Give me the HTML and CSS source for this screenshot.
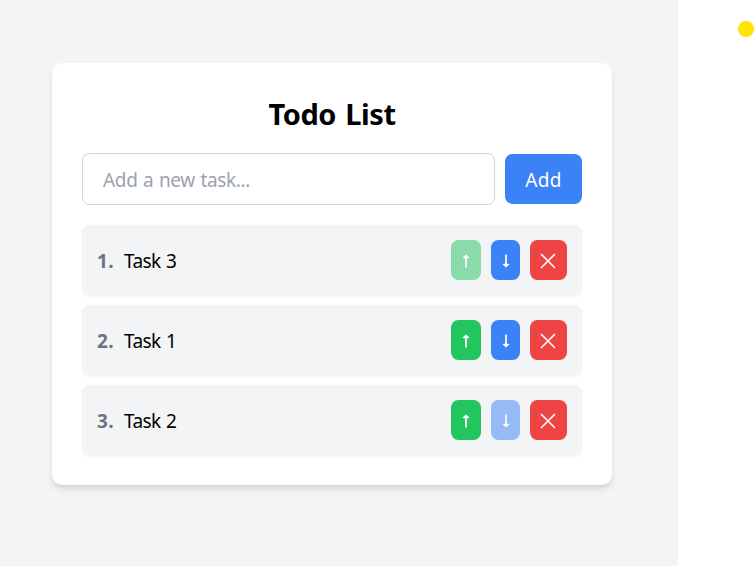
FILE: index.html
```
<!DOCTYPE html>
<html lang="en">
<head>
<meta charset="utf-8">
<title>Todo List</title>
<link rel="stylesheet" href="styles.css">
</head>
<body>
<svg class="symbols" aria-hidden="true">
  <symbol id="up" viewBox="0 0 10 14"><path class="shaft" d="M5 13.5V2"/><path class="head" d="M5 .4 8.5 3.8 7.8 4.3H2.2L1.5 3.8Z"/></symbol>
  <symbol id="down" viewBox="0 0 10 14"><path class="shaft" d="M5 .5V12"/><path class="head" d="M5 13.6 1.5 10.2 2.2 9.7H7.8L8.5 10.2Z"/></symbol>
  <symbol id="cross" viewBox="0 0 16 16"><path d="M1 1l14 14M15 1 1 15"/></symbol>
</svg>
<main class="page">
  <section class="card">
    <h1 class="title">Todo List</h1>
    <form class="form">
      <input class="input" type="text" placeholder="Add a new task...">
      <button class="add" type="button">Add</button>
    </form>
    <ul class="list">
      <li class="item">
        <span class="num">1.</span><span class="name">Task 3</span>
        <button class="btn up disabled" type="button"><svg class="arrow"><use href="#up"/></svg></button>
        <button class="btn down" type="button"><svg class="arrow"><use href="#down"/></svg></button>
        <button class="btn remove" type="button"><svg class="cross"><use href="#cross"/></svg></button>
      </li>
      <li class="item">
        <span class="num">2.</span><span class="name">Task 1</span>
        <button class="btn up" type="button"><svg class="arrow"><use href="#up"/></svg></button>
        <button class="btn down" type="button"><svg class="arrow"><use href="#down"/></svg></button>
        <button class="btn remove" type="button"><svg class="cross"><use href="#cross"/></svg></button>
      </li>
      <li class="item">
        <span class="num">3.</span><span class="name">Task 2</span>
        <button class="btn up" type="button"><svg class="arrow"><use href="#up"/></svg></button>
        <button class="btn down disabled" type="button"><svg class="arrow"><use href="#down"/></svg></button>
        <button class="btn remove" type="button"><svg class="cross"><use href="#cross"/></svg></button>
      </li>
    </ul>
  </section>
</main>
<div class="dot"></div>
</body>
</html>
```
FILE: styles.css
```
* { box-sizing: border-box; margin: 0; padding: 0; }
body {
  height: 566px;
  overflow: hidden;
  background: #fff;
  color: #000;
  font: 19px/30px "Noto Sans", "Open Sans", sans-serif;
}
button, input { font: inherit; border: 0; }
.symbols { position: absolute; width: 0; height: 0; }
.page { width: 678px; height: 566px; padding: 63px 0 0 52px; background: #f3f4f6; }
.card {
  width: 560px;
  height: 422px;
  padding: 30px;
  border-radius: 10px;
  background: #fff;
  box-shadow: 0 5px 7.5px -1.25px rgba(0, 0, 0, .1), 0 2.5px 5px -2.5px rgba(0, 0, 0, .1);
}
.title { height: 40px; margin-bottom: 20px; font-size: 29px; line-height: 42px; font-weight: 700; text-align: center; letter-spacing: -.4px; word-spacing: 2px; }
.form { display: flex; align-items: center; gap: 10px; height: 52px; margin-bottom: 20px; }
.input {
  flex: 1;
  min-width: 0;
  height: 52px;
  padding: 2px 20px 0;
  border: 1px solid #d1d5db;
  border-radius: 7.5px;
  background: #fff;
  letter-spacing: -.35px;
  word-spacing: 1px;
}
.input::placeholder { color: #9ca3af; opacity: 1; }
.add { width: 77px; height: 50px; padding-top: 2px; border-radius: 7.5px; background: #3b82f6; color: #fff; letter-spacing: .3px; }
.list { display: grid; gap: 10px; list-style: none; }
.item {
  display: flex;
  align-items: center;
  height: 70px;
  padding: 0 15px;
  border-radius: 7.5px;
  background: #f3f4f6;
  box-shadow: 0 1.25px 2.5px rgba(0, 0, 0, .05);
}
.num { width: 27px; color: #6b7280; font-weight: 700; letter-spacing: .3px; }
.name { flex: 1; letter-spacing: -.6px; word-spacing: 1px; }
.num, .name { padding-top: 2px; }
.btn { display: flex; align-items: center; justify-content: center; height: 40px; border-radius: 7.5px; }
.up { width: 30px; background: #22c55e; }
.down { width: 29px; margin-left: 10px; background: #3b82f6; }
.remove { width: 37px; margin-left: 10px; background: #ef4444; }
.disabled { opacity: .5; }
.btn svg { fill: none; stroke: #fff; stroke-width: 1.6; }
.arrow .shaft, .shaft { stroke-width: 1.7; }
.head { fill: #fff; stroke: none; }
.arrow { width: 10px; height: 14px; margin-top: 2px; }
.cross { width: 16px; height: 16px; margin: 2px 1px 0 0; }
.dot { position: absolute; left: 738px; top: 21px; width: 15.5px; height: 15.5px; border-radius: 50%; background: #ffe600; }
```
